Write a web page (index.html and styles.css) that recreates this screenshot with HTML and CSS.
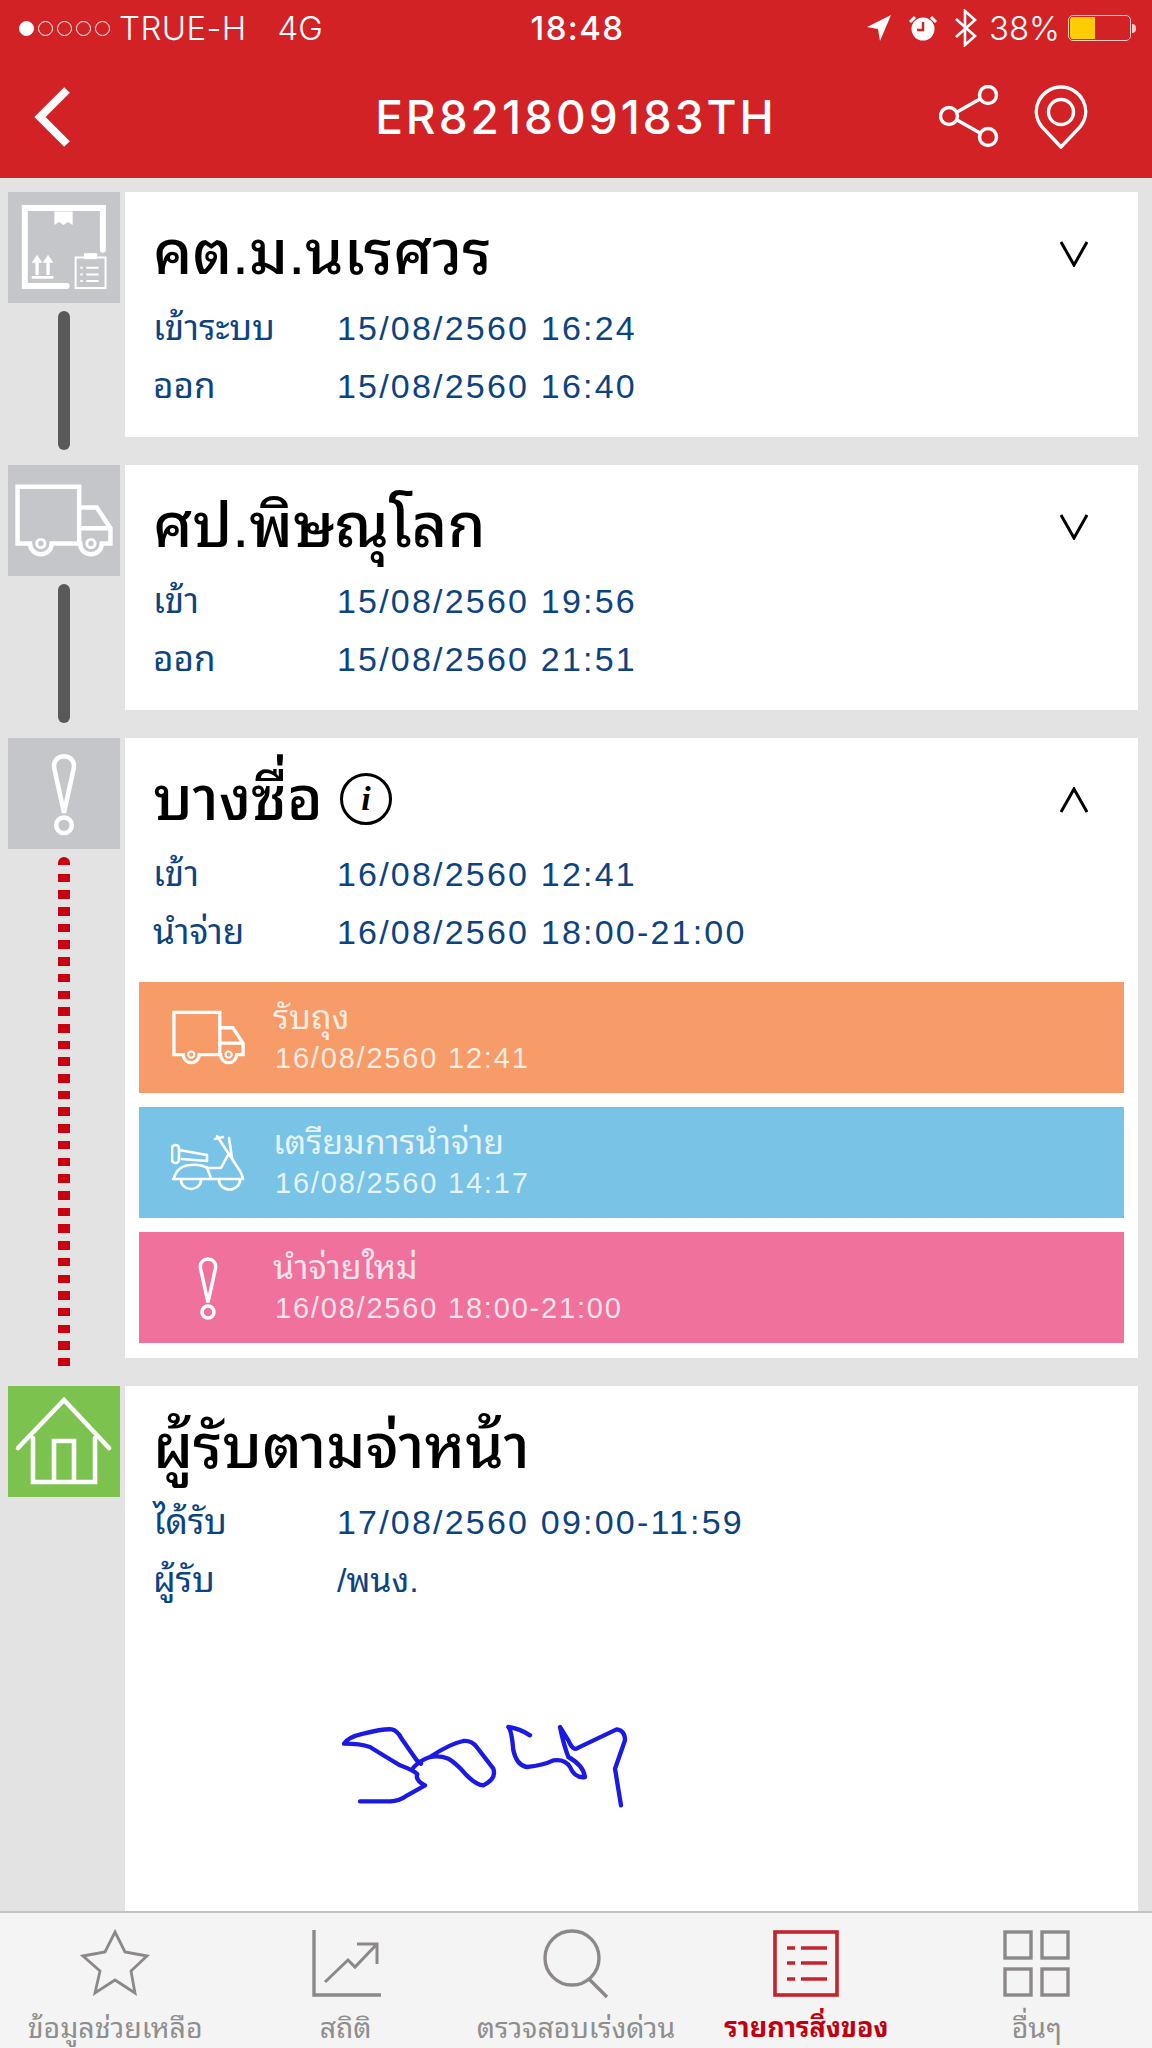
FILE: index.html
```html
<!DOCTYPE html>
<html lang="th">
<head>
<meta charset="utf-8">
<title>ER821809183TH</title>
<link rel="stylesheet" href="styles.css">
</head>
<body>
<svg class="defs" width="0" height="0" aria-hidden="true">
  <symbol id="truck" viewBox="15 52 307 228">
    <path class="ln" d="M216 238V60H23V238H62A34 34 0 0 0 130 238H219A34 34 0 0 0 287 238H314V190L271 125H216M216 190H314"/>
    <circle class="ln thin" cx="96" cy="238" r="13"/>
    <circle class="ln thin" cx="253" cy="238" r="13"/>
  </symbol>
  <symbol id="alert" viewBox="125 36 86 256">
    <path class="ln" d="M168 222L138 85C130 36 206 36 198 85Z"/>
    <circle class="ln" cx="168" cy="260" r="24"/>
  </symbol>
</svg>
<div class="app">
  <header class="top">
    <div class="status">
      <div class="status-left">
        <span class="dots"><i class="dot on"></i><i class="dot"></i><i class="dot"></i><i class="dot"></i><i class="dot"></i></span>
        <span class="carrier">TRUE-H</span>
        <span class="net">4G</span>
      </div>
      <div class="clock">18:48</div>
      <div class="status-right">
        <svg class="s-loc" viewBox="0 0 24 28"><path d="M24 1L13 27L11 15L0 13Z"/></svg>
        <svg class="s-alarm" viewBox="0 0 28 26"><circle cx="14" cy="14" r="11.5" fill="#fff"/><path d="M14 7V15H8" fill="none" stroke="#d22226" stroke-width="2.4"/><path d="M1 7L6 2M27 7L22 2" stroke="#fff" stroke-width="3"/></svg>
        <svg class="s-bt" viewBox="0 0 22 38"><path d="M1 10L20 27L10 36V2L20 11L1 28" fill="none" stroke="#fff" stroke-width="2.6"/></svg>
        <span class="pct">38%</span>
        <span class="battery"><span class="battery-fill"></span></span>
        <span class="battery-tip"></span>
      </div>
    </div>
    <nav class="nav">
      <svg class="back" viewBox="0 0 36 60"><path d="M33 3L6 30L33 57" fill="none" stroke="#fff" stroke-width="8"/></svg>
      <h1 class="code">ER821809183TH</h1>
      <div class="nav-actions">
        <svg class="share" viewBox="0 0 60 63" fill="none" stroke="#fff" stroke-width="3.4"><circle cx="10" cy="31" r="8.5"/><circle cx="49" cy="10" r="8.5"/><circle cx="49" cy="52" r="8.5"/><path d="M18 27L41 14M18 35L41 48"/></svg>
        <svg class="pin" viewBox="0 0 54 64" fill="none" stroke="#fff" stroke-width="3.4"><path d="M27 62L8 42C-6 24 8 2 27 2S60 24 46 42Z"/><circle cx="27" cy="27" r="12.5"/></svg>
      </div>
    </nav>
  </header>
  <main class="timeline">
    <section class="row">
      <div class="rail">
        <div class="tile">
          <svg class="tile-svg" viewBox="0 0 336 334">
            <path class="ln box" d="M285 174V48H50V283H176"/>
            <path class="solid" d="M139 59H194V99L180 90L167 99L153 90L139 99Z"/>
            <path class="solid" d="M71 213L87 189L103 213H92V250H82V213ZM104 213L120 189L136 213H125V250H115V213ZM71 253H136V261H71Z"/>
            <rect class="ln mid" x="203" y="197" width="90" height="92"/>
            <rect class="solid" x="228" y="184" width="40" height="18"/>
            <path class="ln mid" d="M235 228H272M235 248H272M235 268H272M217 228H224M217 248H224M217 268H224"/>
          </svg>
        </div>
        <div class="link"></div>
      </div>
      <article class="card">
        <div class="head">
          <h2 class="title">คต.ม.นเรศวร</h2>
          <svg class="chev" viewBox="0 0 28 26"><path d="M1 1L14 24L27 1" fill="none" stroke="#000" stroke-width="3"/></svg>
        </div>
        <div class="info"><span class="k">เข้าระบบ</span><span class="v">15/08/2560 16:24</span></div>
        <div class="info"><span class="k">ออก</span><span class="v">15/08/2560 16:40</span></div>
      </article>
    </section>
    <section class="row">
      <div class="rail">
        <div class="tile"><svg class="tile-truck"><use href="#truck"/></svg></div>
        <div class="link"></div>
      </div>
      <article class="card">
        <div class="head">
          <h2 class="title">ศป.พิษณุโลก</h2>
          <svg class="chev" viewBox="0 0 28 26"><path d="M1 1L14 24L27 1" fill="none" stroke="#000" stroke-width="3"/></svg>
        </div>
        <div class="info"><span class="k">เข้า</span><span class="v">15/08/2560 19:56</span></div>
        <div class="info"><span class="k">ออก</span><span class="v">15/08/2560 21:51</span></div>
      </article>
    </section>
    <section class="row row-open">
      <div class="rail">
        <div class="tile"><svg class="tile-alert"><use href="#alert"/></svg></div>
        <div class="link link-dash"></div>
      </div>
      <article class="card">
        <div class="head">
          <h2 class="title">บางซื่อ <span class="info-mark">i</span></h2>
          <svg class="chev" viewBox="0 0 28 26"><path d="M1 25L14 2L27 25" fill="none" stroke="#000" stroke-width="3"/></svg>
        </div>
        <div class="info"><span class="k">เข้า</span><span class="v">16/08/2560 12:41</span></div>
        <div class="info"><span class="k">นำจ่าย</span><span class="v">16/08/2560 18:00-21:00</span></div>
        <div class="events">
          <div class="event event-orange">
            <div class="event-icon"><svg class="ev-truck"><use href="#truck"/></svg></div>
            <div class="event-text"><div class="ev-title">รับถุง</div><div class="ev-date">16/08/2560 12:41</div></div>
          </div>
          <div class="event event-blue">
            <div class="event-icon">
              <svg class="ev-scooter" viewBox="0 0 74 60" fill="none" stroke="#fff" stroke-width="2.6" stroke-linejoin="round" stroke-linecap="round">
                <rect x="1" y="12" width="7" height="18" rx="3.5"/>
                <path d="M8 17L36 22V28L11 26"/>
                <path d="M3 46C4 38 11 32 20 32C27 31 33 33 37 35H50L57 22"/>
                <path d="M2 46H72C72 44 71 42 69 38L46 3"/>
                <path d="M44 6L52 4M58 5L61 25"/>
                <path d="M10 47A10 9 0 0 0 30 47M48 47A10 9 0 0 0 69 47"/>
                <path d="M36 35L40 45"/>
              </svg>
            </div>
            <div class="event-text"><div class="ev-title">เตรียมการนำจ่าย</div><div class="ev-date">16/08/2560 14:17</div></div>
          </div>
          <div class="event event-pink">
            <div class="event-icon"><svg class="ev-alert"><use href="#alert"/></svg></div>
            <div class="event-text"><div class="ev-title">นำจ่ายใหม่</div><div class="ev-date">16/08/2560 18:00-21:00</div></div>
          </div>
        </div>
      </article>
    </section>
    <section class="row row-last">
      <div class="rail">
        <div class="tile tile-green">
          <svg class="tile-svg" viewBox="0 0 112 111" fill="none" stroke="#fff" stroke-width="4.6" stroke-linecap="round">
            <path d="M10 62L56 14L101 62"/>
            <path d="M25 52V96H87V52M46 96V55H66V96"/>
          </svg>
        </div>
      </div>
      <article class="card card-last">
        <div class="head">
          <h2 class="title">ผู้รับตามจ่าหน้า</h2>
        </div>
        <div class="info"><span class="k">ได้รับ</span><span class="v">17/08/2560 09:00-11:59</span></div>
        <div class="info"><span class="k">ผู้รับ</span><span class="v v-name">/พนง.</span></div>
        <svg class="signature" viewBox="0 0 1020 390" fill="none" stroke="#1a1ae4" stroke-width="13" stroke-linecap="round" stroke-linejoin="round">
          <path d="M120 313H205Q235 315 262 295L315 265Q285 250 292 232Q285 222 240 205Q190 175 150 150Q120 140 72 140Q85 120 130 110Q190 95 215 97Q232 100 245 125L290 190L303 200"/>
          <path d="M280 212Q300 190 330 180Q390 140 430 132Q455 130 470 150L520 215Q530 245 490 265Q470 265 440 235Q410 200 385 185Q360 175 330 180"/>
          <path d="M565 90Q600 95 630 115M565 90Q575 100 580 160Q590 205 620 210Q670 205 700 190Q735 185 750 210Q765 245 795 240Q790 205 745 180Q730 140 720 90L745 130Q760 165 775 152L890 97Q915 100 915 130L885 215L903 325"/>
        </svg>
      </article>
    </section>
  </main>
  <footer class="tabs">
    <div class="tab">
      <svg class="tab-icon" viewBox="0 0 70 70" fill="none" stroke="#8c8888" stroke-width="2.8"><path d="M35 3L45 23L67 27L51 42L55 64L35 51L15 64L20 42L3 27L25 23Z"/></svg>
      <span class="tab-label">ข้อมูลช่วยเหลือ</span>
    </div>
    <div class="tab">
      <svg class="tab-icon" viewBox="0 0 70 70" fill="none" stroke="#8c8888" stroke-width="3"><path d="M3 1V66H70" stroke-width="3.4"/><path d="M14 53L37 31L44 38L66 15M46 15H66V35"/></svg>
      <span class="tab-label">สถิติ</span>
    </div>
    <div class="tab">
      <svg class="tab-icon" viewBox="0 0 70 70" fill="none" stroke="#8c8888" stroke-width="3.4"><circle cx="31" cy="29" r="27"/><path d="M48 50L66 68"/></svg>
      <span class="tab-label">ตรวจสอบเร่งด่วน</span>
    </div>
    <div class="tab tab-active">
      <svg class="tab-icon" viewBox="0 0 70 70" fill="none" stroke="#c4242c" stroke-width="3.6"><rect x="4" y="3" width="62" height="63"/><path d="M16 19H24M30 19H56M16 34H24M30 34H56M16 50H24M30 50H56"/></svg>
      <span class="tab-label">รายการสิ่งของ</span>
    </div>
    <div class="tab">
      <svg class="tab-icon" viewBox="0 0 70 70" fill="none" stroke="#8c8888" stroke-width="3.4"><rect x="3" y="3" width="26" height="26"/><rect x="40" y="3" width="26" height="26"/><rect x="3" y="40" width="26" height="26"/><rect x="40" y="40" width="26" height="26"/></svg>
      <span class="tab-label">อื่นๆ</span>
    </div>
  </footer>
</div>
</body>
</html>
```
FILE: styles.css
```css
* { box-sizing: border-box; }
html, body { margin: 0; padding: 0; }
body {
  width: 1152px;
  height: 2048px;
  overflow: hidden;
  background: #e3e3e3;
  font-family: "Liberation Sans", "Noto Sans Thai Looped", "Noto Sans Thai", "Noto Sans", sans-serif;
}
.defs { position: absolute; }
.ln { fill: none; stroke: #fff; stroke-width: 14; }
.ln.thin { stroke-width: 9; }
.ln.box { stroke-width: 18; stroke-linecap: round; }
.ln.mid { stroke-width: 6; }
.solid { fill: #fff; }

.app { display: flex; flex-direction: column; height: 2048px; }

.top { background: #d22226; height: 178px; color: #fff; flex: none; }
.status {
  height: 56px;
  display: grid;
  grid-template-columns: 1fr auto 1fr;
  align-items: center;
  font-family: Inter, "Liberation Sans", sans-serif;
  font-size: 33px;
  padding-left: 19px;
  padding-right: 16px;
}
.status-left { display: flex; align-items: center; }
.dots { display: flex; gap: 4px; margin-right: 9px; }
.dot { width: 15px; height: 15px; border-radius: 50%; border: 1.4px solid #fff; display: block; }
.dot.on { background: #fff; }
.carrier { font-weight: 300; letter-spacing: .4px; }
.net { margin-left: 31px; font-weight: 300; }
.clock { font-weight: 500; letter-spacing: 1.4px; }
.status-right { display: flex; align-items: center; justify-content: flex-end; }
.s-loc { width: 24px; height: 28px; fill: #fff; }
.s-alarm { width: 28px; height: 26px; margin-left: 18px; }
.s-bt { width: 22px; height: 38px; margin-left: 18px; }
.pct { margin-left: 12px; font-weight: 300; }
.battery { width: 63px; height: 26px; border: 1.4px solid #f6c8c8; border-radius: 5px; margin-left: 8px; padding: 1px; display: block; }
.battery-fill { display: block; width: 25px; height: 100%; background: #ffcc00; border-radius: 3px 0 0 3px; }
.battery-tip { width: 4px; height: 9px; background: #f6c8c8; border-radius: 0 4px 4px 0; margin-left: 1px; }

.nav { height: 122px; display: grid; grid-template-columns: 1fr auto 1fr; align-items: center; padding: 0 34px; }
.back { width: 36px; height: 60px; }
.code { margin: 0; font-family: Inter, "Liberation Sans", sans-serif; font-size: 46px; font-weight: 500; letter-spacing: 3px; }
.nav-actions { display: flex; justify-content: flex-end; gap: 35px; padding-right: 30px; }
.share { width: 60px; height: 63px; }
.pin { width: 54px; height: 64px; }

.timeline {
  flex: 1;
  min-height: 0;
  overflow: hidden;
  padding: 14px 14px 0 8px;
}
.row { display: grid; grid-template-columns: 112px 1fr; column-gap: 5px; align-items: start; margin-bottom: 15px; }
.row-open { margin-bottom: 20px; }
.rail { display: flex; flex-direction: column; align-items: center; }
.tile { width: 112px; height: 111px; background: #c5c6ca; display: flex; align-items: center; justify-content: center; }
.tile-green { background: #7cc24e; }
.tile-svg { width: 112px; height: 111px; display: block; }
.tile-truck { width: 98px; height: 73px; }
.tile-alert { width: 28px; height: 84px; }
.link { width: 12px; height: 139px; margin-top: 8px; background: #58595b; border-radius: 6px; }
.link-dash {
  height: 509px;
  border-radius: 6px 6px 0 0;
  background: repeating-linear-gradient(to bottom, #c9000f 0, #c9000f 8.5px, transparent 8.5px, transparent 16.7px);
}

.card { background: #fff; padding-bottom: 22px; }
.row-open .card { padding-bottom: 15px; }
.card-last { height: 600px; }
.head { height: 107px; display: flex; justify-content: space-between; padding: 14px 50px 0 28px; }
.head .chev { margin-top: 35px; width: 28px; height: 26px; }
.title { margin: 0; font-size: 61px; line-height: 78px; font-weight: 500; color: #000; display: flex; align-items: center; gap: 17px; }
.info-mark {
  width: 52px; height: 52px;
  border: 3px solid #000;
  border-radius: 50%;
  font: italic bold 34px/46px "Liberation Serif", serif;
  text-align: center;
  display: block;
}
.info { display: flex; height: 58px; line-height: 58px; font-size: 35px; color: #0d437f; padding-left: 28px; }
.k { width: 184px; }
.v { letter-spacing: 2.2px; font-size: 34px; }
.v-name { letter-spacing: 0; }
.events { margin: 21px 14px 0; display: flex; flex-direction: column; gap: 14px; }
.event { height: 111px; display: flex; color: rgba(255,255,255,.82); }
.event-orange { background: #f79b69; }
.event-blue { background: #78c3e6; }
.event-pink { background: #ef719c; }
.event-icon { width: 134px; display: flex; align-items: center; justify-content: flex-end; padding-right: 28px; flex: none; }
.event-pink .event-icon { padding-right: 54px; }
.ev-truck { width: 73px; height: 55px; }
.ev-scooter { width: 74px; height: 60px; }
.ev-alert { width: 22px; height: 64px; }
.event-text { padding-top: 14px; }
.ev-title { font-size: 34px; line-height: 42px; }
.ev-date { font-size: 29px; line-height: 40px; letter-spacing: 1.8px; padding-left: 2px; }
.signature { display: block; width: 340px; height: 130px; margin: 88px 0 0 195px; }

.tabs { height: 137px; flex: none; background: #f4f4f5; border-top: 2px solid #c3c3c3; display: flex; padding-top: 16px; overflow: hidden; }
.tab { flex: 1; display: flex; flex-direction: column; align-items: center; }
.tab-icon { width: 70px; height: 70px; display: block; flex: none; }
.tab-label { font-size: 28.5px; line-height: 40px; color: #8e8e8e; margin-top: 9px; white-space: nowrap; }
.tab-active .tab-label { color: #c00010; font-weight: 700; font-size: 27px; }
```
